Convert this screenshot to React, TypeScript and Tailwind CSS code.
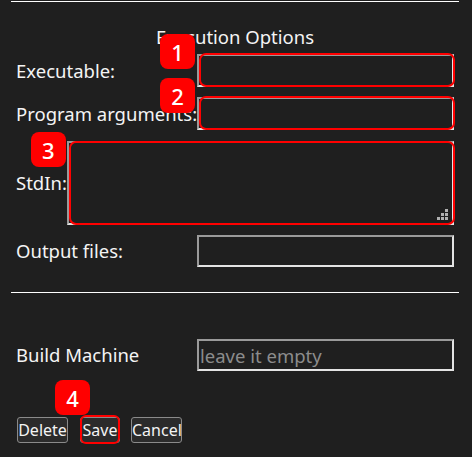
import React from "react";

const font = { fontFamily: '"Noto Sans", "Open Sans", sans-serif' };

function Badge({ n, className }: { n: number; className: string }) {
  return (
    <div
      className={`absolute z-10 flex h-[35px] w-[35px] items-center justify-center rounded-[8px] bg-[#ff0000] text-[22px] font-medium leading-none text-white ${className}`}
    >
      {n}
    </div>
  );
}

const inputCls =
  "h-full w-full bg-[#1f1f1f] border-2 border-[#9a9a9a] border-b-[#e3e3e3] border-r-[#e3e3e3] outline-none";

function Row({
  label,
  children,
  className = "",
}: {
  label: string;
  children: React.ReactNode;
  className?: string;
}) {
  return (
    <div className={`flex items-center justify-between px-[5px] ${className}`}>
      <span className="whitespace-nowrap">{label}</span>
      {children}
    </div>
  );
}

export default function App() {
  return (
    <div
      className="h-[457px] w-[472px] overflow-hidden bg-[#1f1f1f] text-[18.5px] leading-[24px] text-[#f4f4f4]"
      style={font}
    >
      <div className="ml-[11px] w-[448px]">
        <div className="mt-px border-t border-white" />
        <div className="mt-[23px] text-center">Execution Options</div>

        <Row label="Executable:" className="mt-[5px]">
          <div className="relative h-[33px] w-[257px]">
            <input className={inputCls} />
            <div className="pointer-events-none absolute -right-[1px] -top-[1px] bottom-0 left-[2px] rounded-[7px] border-2 border-[#ff0000]" />
            <Badge n={1} className="-left-[37px] -top-[20px]" />
          </div>
        </Row>

        <Row label="Program arguments:" className="mt-[10px]">
          <div className="relative h-[33px] w-[257px]">
            <input className={inputCls} />
            <div className="pointer-events-none absolute -right-[1px] -top-[1px] bottom-0 left-[2px] rounded-[7px] border-2 border-[#ff0000]" />
            <Badge n={2} className="-left-[37px] -top-[19px]" />
          </div>
        </Row>

        <Row label="StdIn:" className="mt-[11px]">
          <div className="relative h-[84px] flex-1">
            <textarea className={`${inputCls} resize-none`} />
            <div className="pointer-events-none absolute -right-[1px] bottom-0 left-[2px] top-0 rounded-[7px] border-2 border-[#ff0000]" />
            <svg
              className="pointer-events-none absolute bottom-[4px] right-[5px]"
              width="12"
              height="12"
              viewBox="0 0 12 12"
            >
              <g fill="#b0b0b0">
                <rect x="8" y="0" width="3" height="3" />
                <rect x="4" y="4" width="3" height="3" />
                <rect x="8" y="4" width="3" height="3" />
                <rect x="0" y="8" width="3" height="3" />
                <rect x="4" y="8" width="3" height="3" />
                <rect x="8" y="8" width="3" height="3" />
              </g>
            </svg>
            <Badge n={3} className="-left-[36px] -top-[9px]" />
          </div>
        </Row>

        <Row label="Output files:" className="mt-[10px]">
          <div className="h-[32px] w-[257px]">
            <input className={inputCls} />
          </div>
        </Row>

        <div className="mt-[25px] border-t border-white" />

        <Row label="Build Machine" className="mt-[46px]">
          <div className="h-[32px] w-[257px]">
            <input
              className={`${inputCls} px-[1px] text-[18.5px] text-[#f4f4f4] placeholder:text-[#8c8c8c]`}
              placeholder="leave it empty"
            />
          </div>
        </Row>

        <div className="mt-[46px] flex items-center px-[6px] text-[16px]">
          <button className="h-[26px] w-[51px] rounded-[3px] border border-[#8a8a8a] bg-[#2b2b2b] px-0 leading-none">
            Delete
          </button>
          <div className="relative ml-[12px]">
            <button className="h-[26px] w-[40px] rounded-[3px] border border-[#8a8a8a] bg-[#2b2b2b] px-0 leading-none">
              Save
            </button>
            <div className="pointer-events-none absolute -bottom-[1px] -top-[2px] left-0 right-0 rounded-[6px] border-2 border-[#ff0000]" />
            <Badge n={4} className="-left-[25px] -top-[37px]" />
          </div>
          <button className="ml-[11px] h-[26px] w-[51px] rounded-[3px] border border-[#8a8a8a] bg-[#2b2b2b] px-0 leading-none">
            Cancel
          </button>
        </div>
      </div>
    </div>
  );
}
